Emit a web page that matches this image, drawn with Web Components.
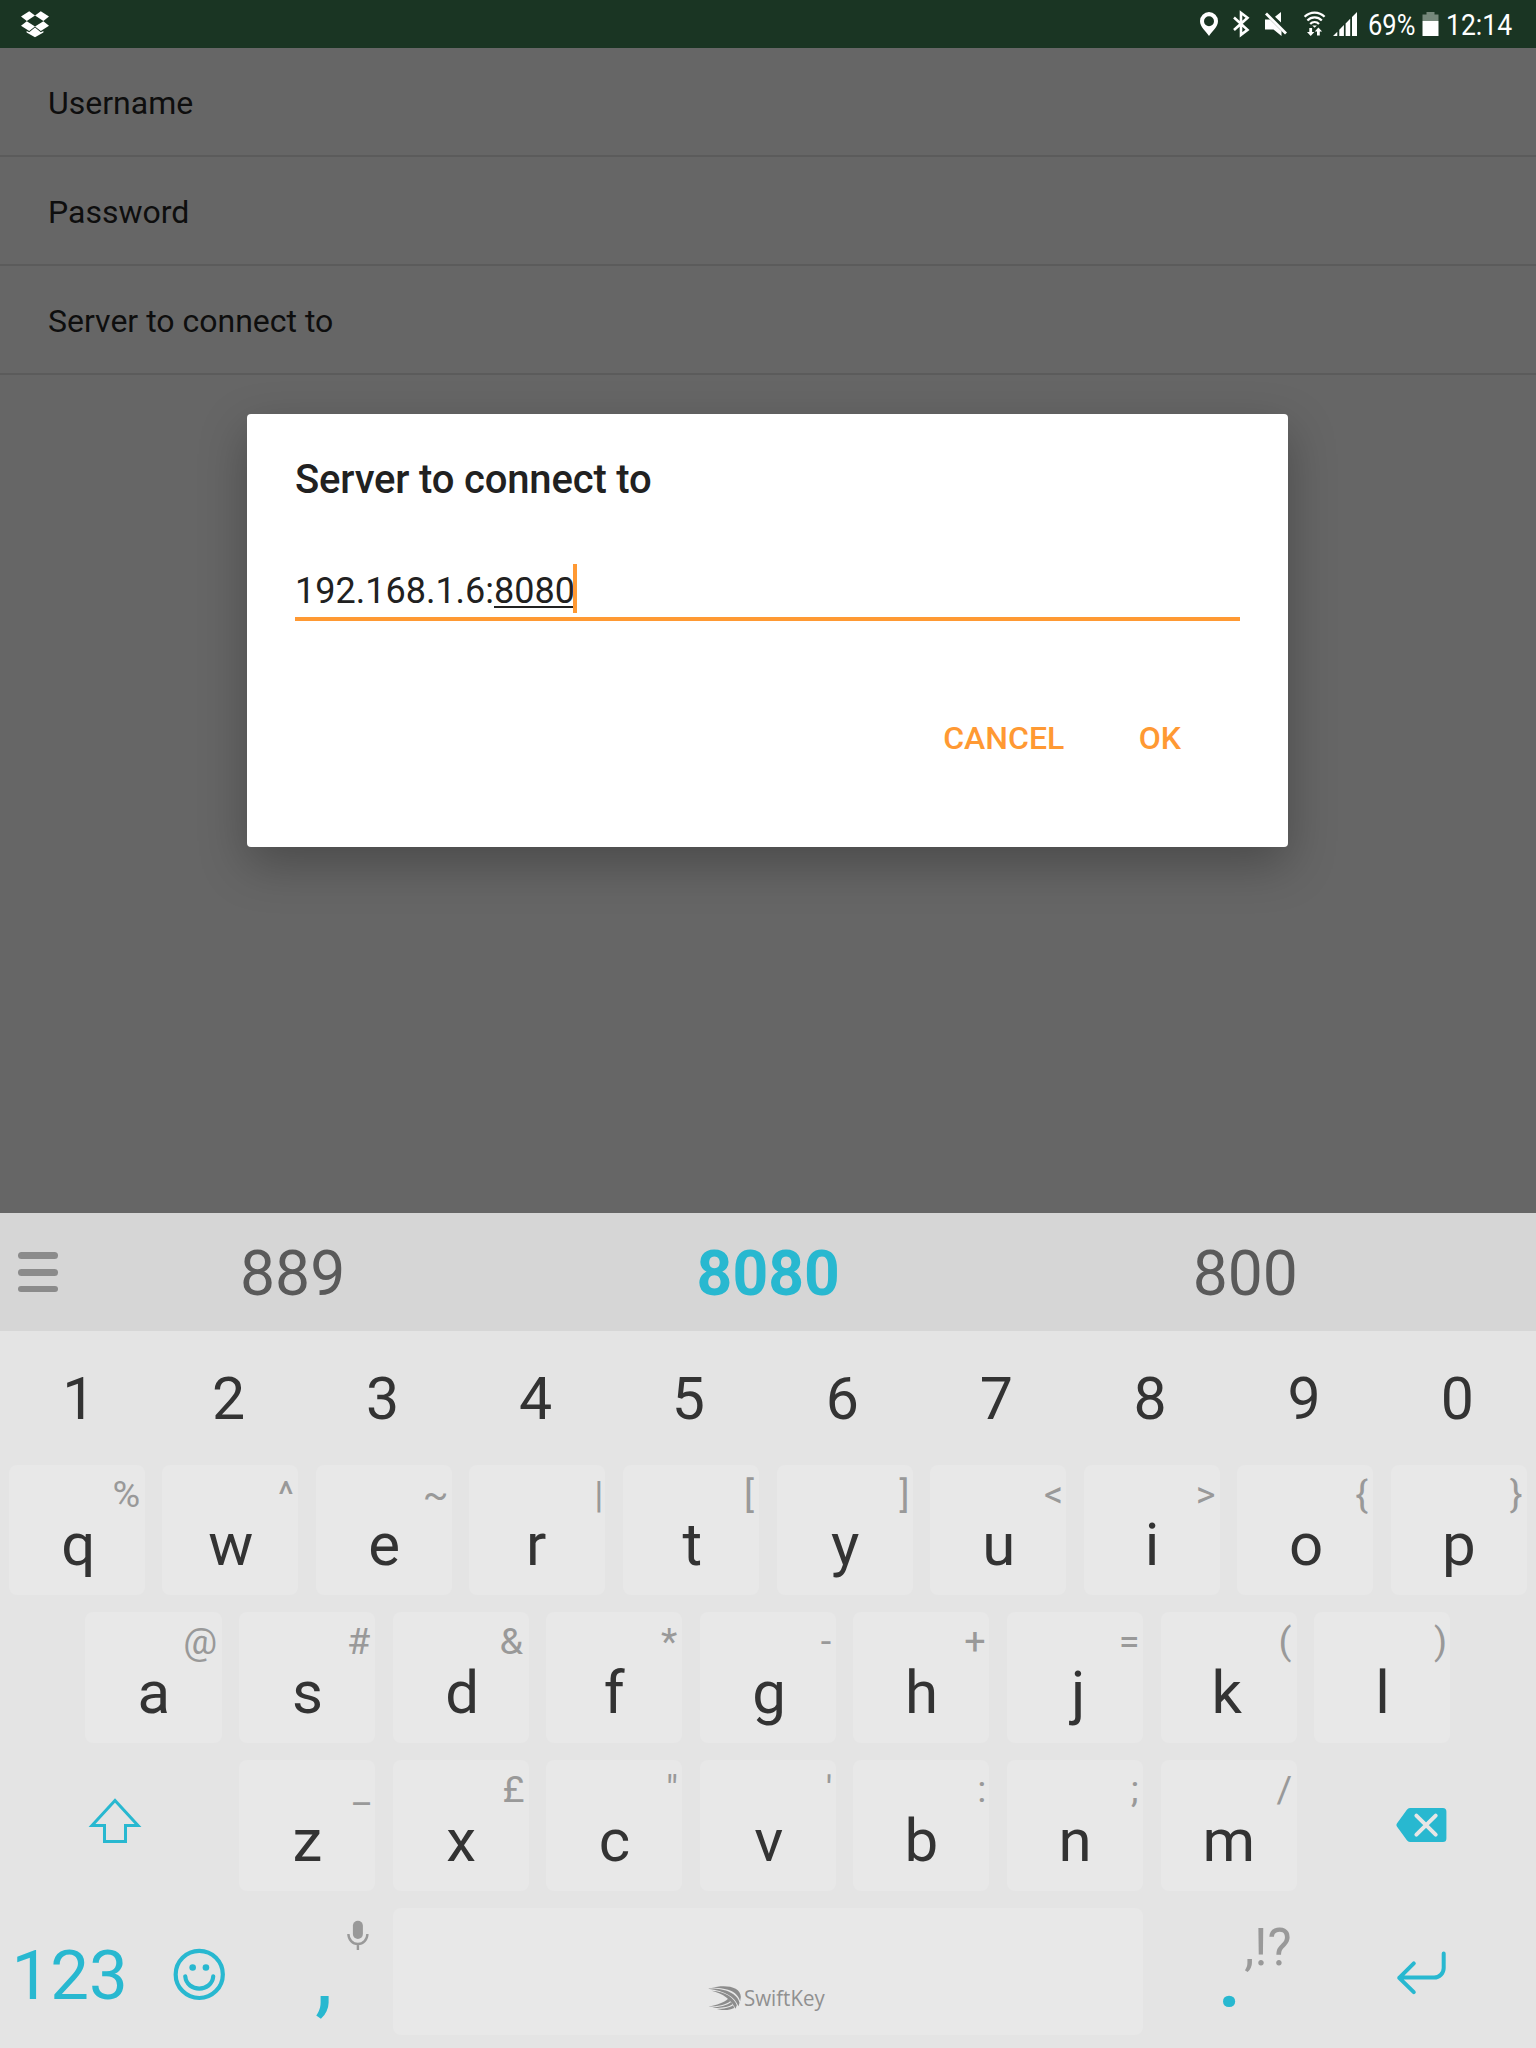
<!DOCTYPE html>
<html lang="en">
<head>
<meta charset="utf-8">
<title>Server to connect to</title>
<style>
  html, body { margin: 0; }
  body { font-family: Roboto, "Noto Sans", sans-serif; }
</style>
</head>
<body>
<app-screen></app-screen>
<script>
const define = (name, html, setup) => {
  const template = document.createElement('template');
  template.innerHTML = html;
  customElements.define(name, class extends HTMLElement {
    connectedCallback() {
      if (this.shadowRoot) return;
      this.attachShadow({ mode: 'open' }).appendChild(template.content.cloneNode(true));
      if (setup) setup(this, this.shadowRoot);
    }
  });
};

const inkContext = document.createElement('canvas').getContext('2d');
const measureInk = (text, font) => {
  inkContext.font = font;
  return inkContext.measureText(text);
};
// Centres the ink of a glyph, not its advance box, inside a centred line.
const centreInk = (element, font) => {
  const m = measureInk(element.textContent || element.dataset.text, font);
  const inkCentre = (m.actualBoundingBoxRight - m.actualBoundingBoxLeft) / 2;
  element.style.textIndent = (m.width - 2 * inkCentre).toFixed(2) + 'px';
};

define('status-bar', `
<style>
  :host { display: flex; height: 48px; background: #1a3523; color: #fff; box-sizing: border-box; flex: none; }
  svg { display: block; flex: none; fill: #fff; }
  .gap { flex: 1; }
  .t { font-size: 30px; line-height: 49px; height: 48px; white-space: nowrap; transform-origin: 0 50%; transform: scaleX(.85); flex: none; }
  .pct { width: 53.500px; margin-left: 8px; }
  .clock { width: 90px; margin-left: 7.500px; transform: scaleX(.885); }
</style>
<svg width="60" height="48" viewBox="0 0 60 48">
  <path d="M29.2 11.2 35 15.6 26.8 21 21 16.4ZM40.8 11.2 49 16.4 43.4 21 35 15.6ZM21 25.8 26.8 21.2 35 26.6 29.2 31ZM43.4 21.2 49 25.8 40.8 31 35 26.6Z"/>
  <path d="M35 27.6 40.8 32.2 43.4 31V32.4L35 37.2 26.6 32.4V31L29.2 32.2Z"/>
</svg>
<div class="gap"></div>
<svg width="170" height="48" viewBox="1190 0 170 48">
  <path fill-rule="evenodd" d="M1209 12a9 9 0 0 0-9 9c0 6 6 10.500 9 15 3-4.500 9-9 9-15a9 9 0 0 0-9-9Zm0 4.200a5 5 0 1 1 0 10 5 5 0 0 1 0-10Z"/>
  <path d="M1234 17.500 1247.500 29.800 1241 34.800V12.800L1247.500 17.800 1234 30" fill="none" stroke="#fff" stroke-width="2.600"/>
  <path d="M1265 19.500h5l11.500 11.500v5l-8-6.500h-8.500ZM1281 12v10.500l-6-5.700Z"/>
  <path d="M1266 13.500 1286 33.500" stroke="#fff" stroke-width="2.800"/>
  <g fill="none" stroke="#fff" stroke-width="2.200">
    <path d="M1304.600 16.800a14 14 0 0 1 20 0M1307.400 20.500a10 10 0 0 1 14.400 0M1310.200 23.900a6 6 0 0 1 8.800 0"/>
  </g>
  <path d="M1312.300 25.600h4.600l-2.300 2.200ZM1309.300 28h2.800v4h2.300l-3.700 4-3.700-4h2.300ZM1317 35.500v-4h-2.300l3.700-4 3.700 4h-2.300v4Z"/>
  <path d="M1333 36l4.300-4.300V36ZM1339.300 29.700l4.600-4.600V36h-4.600ZM1345.600 23.400l4.600-4.600V36h-4.600ZM1352 17l5-5v24h-5Z"/>
</svg>
<div class="t pct">69%</div>
<svg width="17" height="48" viewBox="1421.500 0 17 48">
  <path fill="#76887b" d="M1426 12h8v2.500h4V21h-16v-6.500h4Z"/><path d="M1422 21h16v15h-16Z"/>
</svg>
<div class="t clock">12:14</div>
`);

define('pref-row', `
<style>
  :host { display: block; border-bottom: 2px solid #5b5b5b; padding: 2px 48px 0; height: 105px;
    font-size: 32px; line-height: 106px; color: #0e0e0e; }
</style><slot></slot>`);

define('flat-button', `
<style>
  :host { display: block; font-size: 32px; font-weight: 500; line-height: 48px; color: #ff9933; white-space: nowrap; }
</style><slot></slot>`);

define('edit-field', `
<style>
  :host { display: block; height: 53px; border-bottom: 4px solid #ff9933; font-size: 36px; line-height: 48px; color: #212121; }
  .line { display: flex; align-items: flex-start; }
  .composing { position: relative; }
  .composing::after { content: ""; position: absolute; left: 0; right: 0; top: 42px; height: 2px; background: #212121; }
  .text, .composing { padding-top: 3px; height: 46px; }
  .caret { width: 4px; height: 49px; background: #ff9933; margin-left: -2px; position: relative; z-index: 1; }
</style>
<div class="line"><span class="text"><slot></slot></span><span class="composing"><slot name="composing"></slot></span><span class="caret"></span></div>`);

define('alert-dialog', `
<style>
  :host { display: flex; flex-direction: column; width: 1041px; height: 433px; box-sizing: border-box; padding: 42px 48px 0 48px;
    background: #fff; border-radius: 4px; box-shadow: 0 17px 48px rgba(0,0,0,.28); }
  h1 { margin: 0; font-size: 40px; font-weight: 500; line-height: 47px; letter-spacing: -.170px; color: #212121; }
  .body { margin-top: 61px; }
  .actions { display: flex; justify-content: flex-end; gap: 74.500px; margin-top: 93px; padding-right: 59px; }
</style>
<h1><slot name="title"></slot></h1>
<div class="body"><slot></slot></div>
<div class="actions"><slot name="actions"></slot></div>`);

define('suggestion-bar', `
<style>
  :host { display: flex; height: 118px; background: #d6d6d6; flex: none; font-size: 62.4px; line-height: 119px; color: #5a5a5a; }
  .menu { width: 54.500px; display: flex; flex-direction: column; gap: 10px; padding: 39px 0 0 18px; box-sizing: border-box; }
  .menu i { width: 40px; height: 6.800px; border-radius: 4px; background: #8b8b8b; }
  .words { display: grid; grid-template-columns: repeat(3, 476.300px); text-align: center; padding-top: 1px; height: 117px; }
  b { color: #28b8d0; margin-left: -1.500px; }
</style>
<div class="menu"><i></i><i></i><i></i></div>
<div class="words"><span>889</span><b>8080</b><span>800</span></div>`);

// A letter key; the "hint" attribute holds the long-press symbol of its top right corner.
define('letter-key', `
<style>
  :host { display: block; width: 153.600px; height: 100%; padding: var(--key-top, 8px) 8.900px 9px 8.600px; box-sizing: border-box; }
  .cap { display: grid; height: 100%; border-radius: 8px; background: #e8e8e8; }
  .cap > * { grid-area: 1 / 1; }
  .letter { text-align: center; font-size: 60px; line-height: 131px; padding: calc(23px - var(--key-top, 8px)) 0 0 1px; height: 110px; color: #333; }
  .hint { justify-self: end; font-size: 37.800px; line-height: 44px; padding-top: 7px; height: 44px; color: #999; }
</style>
<div class="cap"><span class="letter"><slot></slot></span><span class="hint"></span></div>`,
(host, root) => {
  const text = host.getAttribute('hint');
  const hint = root.querySelector('.hint');
  hint.textContent = text;
  const m = measureInk(text, '37.8px Roboto');
  hint.style.marginRight = (5.2 - (m.width - m.actualBoundingBoxRight)) + 'px';
  const letter = root.querySelector('.letter');
  letter.dataset.text = host.textContent;
  centreInk(letter, '60px Roboto');
});

define('key-row', `
<style>
  :host { display: flex; height: 148px; flex: none; }
  :host([top]) { --key-top: 9px; }
  :host([inset]) { padding-left: 76.800px; }
</style><slot></slot>`);

define('icon-key', `
<style>
  :host { display: flex; width: 230.400px; height: 100%; justify-content: center; }
  ::slotted(svg) { display: block; }
</style><slot></slot>`);

define('number-row', `
<style>
  :host { display: grid; grid-template-columns: repeat(10, 153.600px); height: 125px; flex: none; box-sizing: border-box;
    text-align: center; font-size: 59px; line-height: 125px; padding-top: 5px; color: #333; margin-left: -2px; }
</style>
${[1,2,3,4,5,6,7,8,9,0].map(n => `<span>${n}</span>`).join('')}`,
(host, root) => root.querySelectorAll('span').forEach(n => centreInk(n, '59px Roboto')));

define('bottom-row', `
<style>
  :host { display: flex; height: 148px; color: #28b8d0; flex: none; }
  .mode { width: 138.200px; text-align: center; font-size: 69px; line-height: 151px; padding-left: 1px; box-sizing: border-box; }
  .emoji { width: 122.900px; }
  .comma, .period { display: grid; }
  .comma > *, .period > * { grid-area: 1 / 1; }
  .comma { width: 122.900px; }
  .period { width: 153.600px; }
  .big { font-size: 90px; line-height: 150px; height: 140px; padding-top: 1px; text-align: center; }
  .period .big { padding-top: 0; line-height: 151px; font-weight: 500; font-size: 88px; }
  .more { justify-self: end; margin-right: 14px; font-size: 51px; line-height: 61px; padding-top: 17px; color: #999; }
  .space { width: 750.400px; height: 127px; margin: 8px 8.900px 0 8.700px; border-radius: 8px; background: #e8e8e8; display: flex; align-items: flex-start; justify-content: center; box-sizing: border-box; padding: 77px 5px 0 0; color: #909090; }
  .space svg { margin-top: .500px; }
  .brand { font-family: "Open Sans", sans-serif; font-size: 22px; line-height: 28px; width: 79px; transform: scaleX(.93); transform-origin: 0 0; margin: -2px 0 0 3px; white-space: nowrap; }
  svg { display: block; }
</style>
<div class="mode">123</div>
<svg class="emoji" width="123" height="148" viewBox="137.700 1900 123 148">
  <g fill="none" stroke="#28b8d0" stroke-width="4.200"><circle cx="199" cy="1974.400" r="23.600"/>
  <path stroke-linecap="round" d="M185 1976.400c1.500 16.200 26.500 16.200 28 0"/></g>
  <g fill="#28b8d0"><circle cx="192.400" cy="1967.500" r="3.300"/><circle cx="205.700" cy="1967.500" r="3.300"/></g>
</svg>
<div class="comma"><span class="big">,</span>
<svg width="123" height="60" viewBox="261.100 1900 123 60">
  <rect x="353" y="1920.700" width="10" height="18.300" rx="5" fill="#999"/>
  <path d="M348.500 1934a9.500 10 0 0 0 19 0M358 1944v6" fill="none" stroke="#999" stroke-width="2.400"/>
</svg></div>
<div class="space">
<svg width="33" height="24" viewBox="0 0 98 72" fill="#8c8c8c">
  <path d="M10 5C50-5 98 0 98 33L96 46C90 20 65 5 10 5Z"/>
  <path d="M0 8C48 6 88 22 94 50L91 61C80 32 50 14 0 8Z"/>
  <path d="M10 14C50 16 80 36 86 58L82 68C70 42 45 22 10 14Z"/>
  <path d="M0 62C28 56 46 50 60 38L67 45C52 57 30 61 0 62Z"/>
  <path d="M12 65C40 62 56 58 69 48L73 55C58 65 38 67 12 65Z"/>
  <path d="M26 69C48 69 62 66 75 58L78 66C62 74 44 74 26 69Z"/>
</svg>
<span class="brand">SwiftKey</span></div>
<div class="period"><span class="big">.</span><span class="more">,!?</span></div>
<svg width="230.400" height="148" viewBox="1305.600 1900 230.400 148" fill="none" stroke="#28b8d0" stroke-width="4" stroke-linecap="round" stroke-linejoin="round">
  <path d="M1443.300 1953.600v14.400a9.600 9.600 0 0 1-9.600 9.600H1399M1413.400 1963.300 1398.800 1977.800 1413.400 1992.200"/>
</svg>`,
(host, root) => {
  centreInk(root.querySelector('.comma .big'), '90px Roboto');
  centreInk(root.querySelector('.period .big'), '500 88px Roboto');
});

define('soft-keyboard', `
<style>
  :host { display: flex; flex-direction: column; height: 835px; background: #e4e4e4; overflow: hidden; flex: none; }
</style>
<suggestion-bar></suggestion-bar>
<number-row></number-row>
<key-row top data-keys="q% w^ e~ r| t[ y] u&lt; i&gt; o{ p}"></key-row>
<key-row inset data-keys="a@ s# d&amp; f* g- h+ j= k( l)"></key-row>
<key-row data-keys="z_ x£ c&quot; v' b: n; m/">
  <icon-key><svg width="230.400" height="148" viewBox="0 1752 230.400 148"><path d="M115 1800.500 92 1825.400H104.500V1841.500H125.500V1825.400H138Z" fill="none" stroke="#28b8d0" stroke-width="3"/></svg></icon-key>
</key-row>
<bottom-row></bottom-row>`,
(host, root) => {
  for (const row of root.querySelectorAll('key-row')) {
    for (const pair of row.dataset.keys.split(' ')) {
      const key = document.createElement('letter-key');
      key.setAttribute('hint', pair[1]);
      key.textContent = pair[0];
      row.append(key);
    }
  }
  const erase = document.createElement('icon-key');
  erase.innerHTML = `<svg width="230.400" height="148" viewBox="1305.600 1752 230.400 148">
    <path fill="#28b8d0" d="M1409.500 1808H1442.500a3.500 3.500 0 0 1 3.500 3.500V1838.500a3.500 3.500 0 0 1-3.500 3.500H1409.500a4 4 0 0 1-3-1.700L1396.500 1826.500a2.500 2.500 0 0 1 0-3L1406.500 1809.700a4 4 0 0 1 3-1.700Z"/>
    <path d="M1416 1815.600 1435.300 1834.600M1435.300 1815.600 1416 1834.600" stroke="#e6e6e6" stroke-width="4" stroke-linecap="round"/></svg>`;
  root.querySelectorAll('key-row')[2].append(erase);
});

define('app-screen', `
<style>
  :host { display: flex; flex-direction: column; width: 1536px; height: 2048px; background: #666; overflow: hidden; }
  main { flex: 1; min-height: 0; display: flex; flex-direction: column; }
  alert-dialog { margin: 39px 0 0 247px; }
</style>
<status-bar></status-bar>
<main>
  <pref-row>Username</pref-row>
  <pref-row>Password</pref-row>
  <pref-row>Server to connect to</pref-row>
  <alert-dialog>
    <span slot="title">Server to connect to</span>
    <edit-field>192.168.1.6:<span slot="composing">8080</span></edit-field>
    <flat-button slot="actions">CANCEL</flat-button>
    <flat-button slot="actions">OK</flat-button>
  </alert-dialog>
</main>
<soft-keyboard></soft-keyboard>`);
</script>
</body>
</html>
